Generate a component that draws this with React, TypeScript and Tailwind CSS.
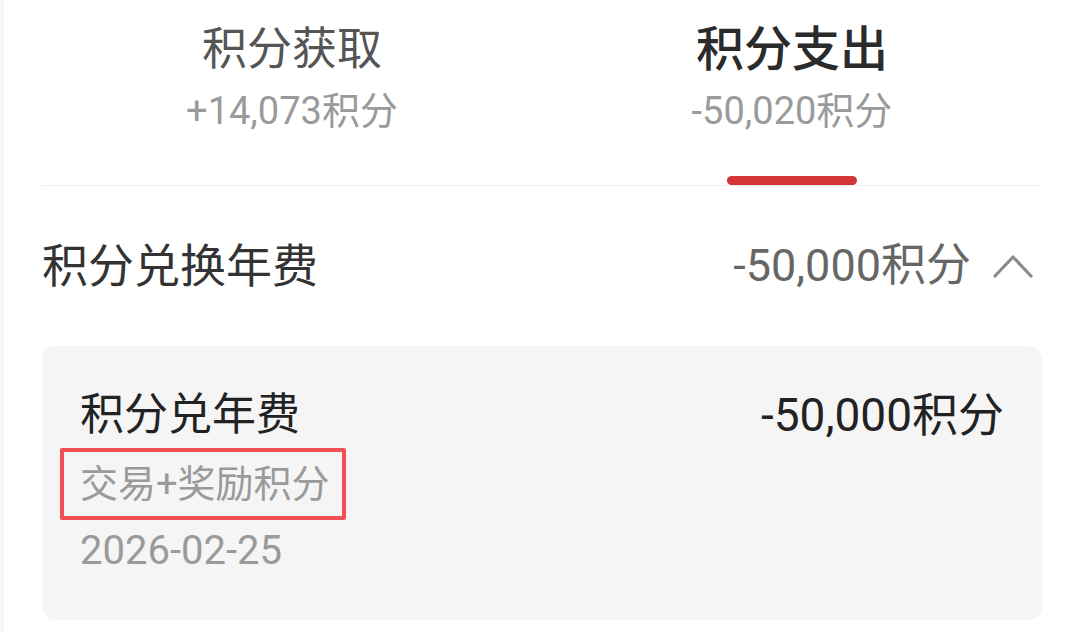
const font = "font-['Roboto','Noto_Sans_CJK_SC',sans-serif]";

type TabProps = {
  title: string;
  amount: string;
  active?: boolean;
};

function Tab({ title, amount, active }: TabProps) {
  return (
    <div className="flex flex-col items-center h-full">
      <div
        className={
          active
            ? "mt-[20px] text-[48px] leading-[60px] font-medium text-[#2b2b2b]"
            : "mt-[20px] text-[45px] leading-[60px] text-[#555555]"
        }
      >
        {title}
      </div>
      <div className="mt-[11px] text-[38px] leading-[40px] text-[#9a9a9a]">{amount}</div>
      <div
        className={`mt-auto w-[130px] h-[9px] rounded-full ${
          active ? "bg-[#d23437]" : "bg-transparent"
        }`}
      />
    </div>
  );
}

function Chevron() {
  return (
    <svg width="40" height="26" viewBox="0 0 40 26" fill="none" className="text-[#8a8a8a]">
      <polyline
        points="2,23 20,4 38,23"
        stroke="currentColor"
        strokeWidth="3.2"
        strokeLinecap="round"
        strokeLinejoin="round"
      />
    </svg>
  );
}

export default function App() {
  return (
    <div className={`w-[1072px] h-[632px] bg-white flex overflow-hidden ${font}`}>
      <div className="w-[4px] h-full bg-[#f6f6f6]" />
      <div className="ml-[38px] w-[1000px] flex flex-col">
        {/* tabs */}
        <div className="grid grid-cols-2 h-[186px] border-b border-[#eeeeee]">
          <Tab title="积分获取" amount="+14,073积分" />
          <Tab title="积分支出" amount="-50,020积分" active />
        </div>

        {/* group header */}
        <div className="h-[160px] flex items-center justify-between">
          <span className="text-[46px] leading-[56px] text-[#333333]">积分兑换年费</span>
          <div className="flex items-center gap-[22px] pr-[9px]">
            <span className="text-[45px] leading-[56px] text-[#666666]">-50,000积分</span>
            <Chevron />
          </div>
        </div>

        {/* record card */}
        <div className="h-[274px] rounded-[14px] bg-[#f5f5f5] px-[38px] pt-[45px]">
          <div className="flex items-center justify-between">
            <span className="text-[44px] leading-[48px] text-[#222222]">积分兑年费</span>
            <span className="text-[46px] leading-[48px] text-[#222222]">-50,000积分</span>
          </div>
          <div className="mt-[9px] -ml-[20px] w-fit border-[4px] border-[#f04f55] rounded-[2px] pl-[16px] pr-[12px] h-[72px] flex items-center">
            <span className="text-[38px] leading-[44px] text-[#9a9a9a]">交易+奖励积分</span>
          </div>
          <div className="mt-[9px] text-[40px] leading-[44px] text-[#9a9a9a]">2026-02-25</div>
        </div>
      </div>
    </div>
  );
}
